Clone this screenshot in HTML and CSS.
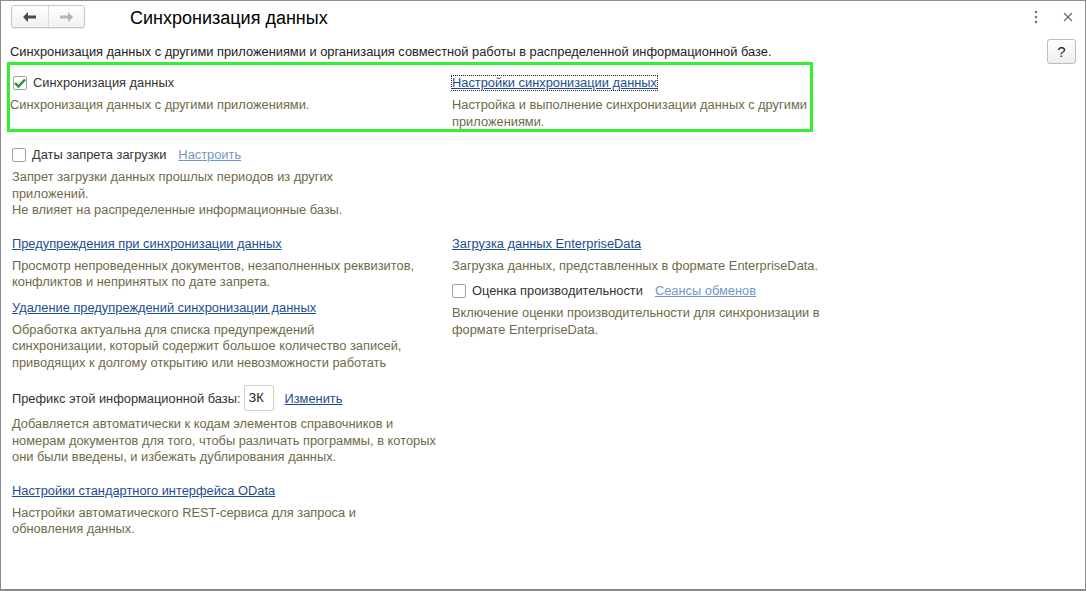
FILE: index.html
```html
<!DOCTYPE html>
<html lang="ru">
<head>
    <meta charset="UTF-8">
    <title>Синхронизация данных</title>
    <link rel="stylesheet" href="styles.css">
</head>
<body>
    <div class="window">
        <div class="header">
            <div class="nav">
                <button class="nav-btn">
                    <svg width="14" height="10" viewBox="0 0 14 10"><path d="M0 5 L5 0 L5 3.5 L13 3.5 L13 6.5 L5 6.5 L5 10 Z" fill="#4a4a4a"/></svg>
                </button>
                <button class="nav-btn">
                    <svg width="14" height="10" viewBox="0 0 14 10"><path d="M14 5 L9 0 L9 3.5 L1 3.5 L1 6.5 L9 6.5 L9 10 Z" fill="#b4b4b4"/></svg>
                </button>
            </div>
            <h1 class="title">Синхронизация данных</h1>
            <div class="tools">
                <svg class="more" width="4" height="14" viewBox="0 0 4 14"><circle cx="2" cy="2" r="1.3" fill="#777"/><circle cx="2" cy="7" r="1.3" fill="#777"/><circle cx="2" cy="12" r="1.3" fill="#777"/></svg>
                <svg class="close" width="10" height="10" viewBox="0 0 10 10"><path d="M1 1 L9 9 M9 1 L1 9" stroke="#666" stroke-width="1.1"/></svg>
            </div>
        </div>

        <div class="content">
            <div class="intro-row">
                <p class="intro">Синхронизация данных с другими приложениями и организация совместной работы в распределенной информационной базе.</p>
                <button class="help">?</button>
            </div>

            <div class="group focused">
                <div class="item">
                    <label class="check-row">
                        <span class="checkbox checked">
                            <svg width="12" height="10" viewBox="0 0 12 10"><path d="M1 5 L4.5 8.5 L11 1.5" stroke="#22913a" stroke-width="2.4" fill="none"/></svg>
                        </span>
                        Синхронизация данных
                    </label>
                    <p class="desc">Синхронизация данных с другими приложениями.</p>
                </div>
                <div class="item">
                    <div class="link-row"><a href="#" class="link focus">Настройки синхронизации данных</a></div>
                    <p class="desc">Настройка и выполнение синхронизации данных с другими<br>приложениями.</p>
                </div>
            </div>

            <div class="item single">
                <label class="check-row">
                    <span class="checkbox"></span>
                    Даты запрета загрузки
                    <a href="#" class="link light">Настроить</a>
                </label>
                <p class="desc">Запрет загрузки данных прошлых периодов из других<br>приложений.<br>Не влияет на распределенные информационные базы.</p>
            </div>

            <div class="columns">
                <div class="col">
                    <div class="item">
                        <div class="link-row"><a href="#" class="link">Предупреждения при синхронизации данных</a></div>
                        <p class="desc">Просмотр непроведенных документов, незаполненных реквизитов,<br>конфликтов и непринятых по дате запрета.</p>
                    </div>
                    <div class="item">
                        <div class="link-row"><a href="#" class="link">Удаление предупреждений синхронизации данных</a></div>
                        <p class="desc">Обработка актуальна для списка предупреждений<br>синхронизации, который содержит большое количество записей,<br>приводящих к долгому открытию или невозможности работать</p>
                    </div>
                    <div class="item prefix">
                        <div class="prefix-row">
                            <span>Префикс этой информационной базы:</span>
                            <span class="field">ЗК</span>
                            <a href="#" class="link">Изменить</a>
                        </div>
                        <p class="desc">Добавляется автоматически к кодам элементов справочников и<br>номерам документов для того, чтобы различать программы, в которых<br>они были введены, и избежать дублирования данных.</p>
                    </div>
                    <div class="item spaced">
                        <div class="link-row"><a href="#" class="link">Настройки стандартного интерфейса OData</a></div>
                        <p class="desc">Настройки автоматического REST-сервиса для запроса и<br>обновления данных.</p>
                    </div>
                </div>
                <div class="col">
                    <div class="item">
                        <div class="link-row"><a href="#" class="link">Загрузка данных EnterpriseData</a></div>
                        <p class="desc">Загрузка данных, представленных в формате EnterpriseData.</p>
                    </div>
                    <div class="item">
                        <label class="check-row">
                            <span class="checkbox"></span>
                            Оценка производительности
                            <a href="#" class="link light">Сеансы обменов</a>
                        </label>
                        <p class="desc">Включение оценки производительности для синхронизации в<br>формате EnterpriseData.</p>
                    </div>
                </div>
            </div>
        </div>
    </div>
</body>
</html>
```

FILE: styles.css
```css
* {
    box-sizing: border-box;
}

body {
    margin: 0;
    font-family: "Liberation Sans", Arial, sans-serif;
    font-size: 12.85px;
    color: #333;
    background: #fff;
}

.window {
    width: 1086px;
    height: 591px;
    border: 1px solid #8c8c8c;
    border-bottom-width: 2px;
    background: #fff;
}

.header {
    display: flex;
    align-items: flex-start;
    height: 32px;
    padding: 4px 0 0 10px;
}

.nav {
    display: flex;
    width: 74px;
    height: 23px;
    border: 1px solid #c6c6c6;
    border-radius: 3px;
    background: linear-gradient(#ffffff, #f1f1f1);
    box-shadow: 0 1px 1px rgba(0, 0, 0, 0.08);
}

.nav-btn {
    flex: 1;
    display: flex;
    align-items: center;
    justify-content: center;
    border: none;
    background: none;
    padding: 0;
}

.nav-btn + .nav-btn {
    border-left: 1px solid #dadada;
}

.title {
    margin: 2px 0 0 45px;
    font-size: 18px;
    font-weight: normal;
    color: #000;
    line-height: 22px;
}

.tools {
    margin-left: auto;
    display: flex;
    align-items: center;
    gap: 25px;
    padding: 5px 12px 0 0;
}

.content {
    padding: 0 9px;
}

.intro-row {
    display: flex;
    align-items: center;
    justify-content: space-between;
    height: 25px;
    margin-top: 6px;
}

.intro {
    margin: 0;
    color: #222;
    line-height: 16px;
}

.help {
    width: 29px;
    height: 25px;
    border: 1px solid #bdbdbd;
    border-radius: 3px;
    background: linear-gradient(#ffffff, #eeeeee);
    font-family: "Liberation Sans", Arial, sans-serif;
    font-size: 15px;
    color: #222;
    padding: 0;
}

.group {
    display: grid;
    grid-template-columns: 442px 1fr;
    width: 806px;
    height: 70px;
    margin: -2px 0 0 -3px;
    padding: 8px 0 0 0;
}

.focused {
    border: 3px solid #33f033;
}

.group .check-row {
    margin-left: 3px;
}

.item {
    margin-bottom: 7px;
}

.group .item {
    margin-bottom: 0;
}

.single {
    margin: 13px 0 15px 2px;
}

.check-row,
.link-row {
    display: flex;
    align-items: center;
    height: 20px;
    line-height: 20px;
    color: #333;
    white-space: nowrap;
}

.checkbox {
    display: inline-flex;
    align-items: center;
    justify-content: center;
    width: 14px;
    height: 14px;
    margin-right: 6px;
    border: 1px solid #a3a3a3;
    border-radius: 2px;
    background: #fff;
}

.desc {
    margin: 4px 0 0;
    line-height: 16.5px;
    color: #6e6a48;
    white-space: nowrap;
}

.link {
    color: #1d4d91;
    text-decoration: underline;
}

.link.light {
    color: #7396c9;
    margin-left: 12px;
}

.link.focus {
    outline: 1px dotted #222;
    line-height: 14px;
}

.columns {
    display: grid;
    grid-template-columns: 440px 1fr;
    margin-left: 2px;
}

.prefix {
    margin-top: 14px;
}

.prefix-row {
    display: flex;
    align-items: center;
    height: 26px;
    color: #333;
    white-space: nowrap;
}

.field {
    display: inline-block;
    width: 30px;
    height: 26px;
    line-height: 24px;
    margin: 0 11px 0 3px;
    padding-left: 4px;
    border: 1px solid #cfcfcf;
    border-radius: 2px;
    color: #222;
}

.prefix .desc {
    margin-top: 5px;
}

.spaced {
    margin-top: 15px;
}
```
